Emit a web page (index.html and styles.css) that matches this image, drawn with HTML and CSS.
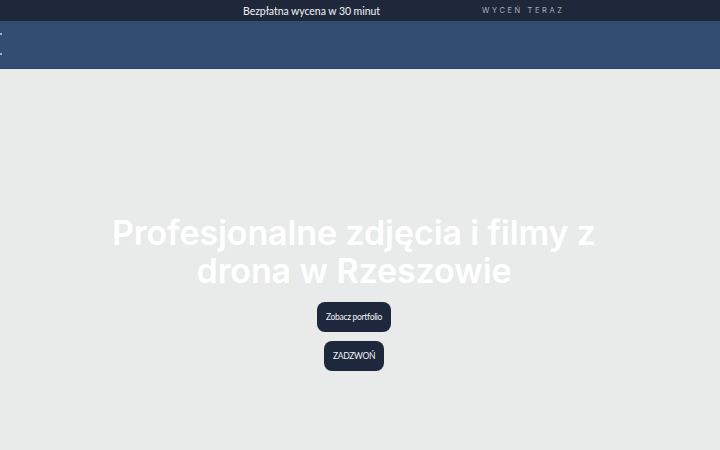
FILE: index.html
```html
<!DOCTYPE html>
<html lang="pl">
<head>
  <meta charset="UTF-8" />
  <title>Zdjęcia i filmy z drona Rzeszów</title>
  <link rel="stylesheet" href="styles.css">
</head>
<body>

  <div class="promo-bar">
    <span class="promo-text">Bezpłatna wycena w 30 minut</span>
    <a class="promo-link" href="#kontakt">WYCEŃ TERAZ</a>
  </div>

  <nav class="navbar">
    <div class="nav-menu">
      <span class="nav-dot"></span>
      <span class="nav-dot"></span>
    </div>
  </nav>

  <section class="hero">
    <h1>Profesjonalne zdjęcia i filmy z<br>drona w Rzeszowie</h1>
    <div class="hero-actions">
      <a class="btn" href="#portfolio">Zobacz portfolio</a>
      <a class="btn" href="tel:+48">ZADZWOŃ</a>
    </div>
  </section>

</body>
</html>
```

FILE: styles.css
```css
body {
  margin: 0;
  padding: 0;
  background-color: #e9eaea;
  font-family: 'Inter', 'Noto Sans', sans-serif;
}

.promo-bar {
  height: 21px;
  background: #1f283a;
  display: flex;
  align-items: center;
  gap: 102px;
  padding-left: 243px;
}

.promo-text {
  color: #f2f3f5;
  font-family: 'Lato', 'Noto Sans', sans-serif;
  font-size: 10.5px;
  letter-spacing: -0.05px;
}

.promo-link {
  color: #a9b0bd;
  font-size: 7.5px;
  letter-spacing: 2.6px;
  text-decoration: none;
}

.navbar {
  height: 47px;
  background: #334d72;
  border-bottom: 1px solid #2c4163;
}

.nav-menu {
  display: flex;
  flex-direction: column;
  gap: 18px;
  padding-top: 12px;
}

.nav-dot {
  width: 2px;
  height: 2px;
  background: #9fb0c9;
}

.hero {
  padding: 145px 12px 0 0;
  text-align: center;
}

.hero h1 {
  margin: 0;
  color: #ffffff;
  font-size: 34px;
  font-weight: 600;
  line-height: 38px;
  letter-spacing: -0.1px;
}

.hero-actions {
  display: flex;
  flex-direction: column;
  align-items: center;
  gap: 9px;
  margin-top: 12px;
}

.btn {
  display: inline-block;
  padding: 0 9px;
  height: 30px;
  line-height: 30px;
  border-radius: 8px;
  background: #1e283c;
  color: #f2f3f5;
  font-family: 'Lato', 'Noto Sans', sans-serif;
  font-size: 8.5px;
  letter-spacing: -0.3px;
  text-decoration: none;
}
```
